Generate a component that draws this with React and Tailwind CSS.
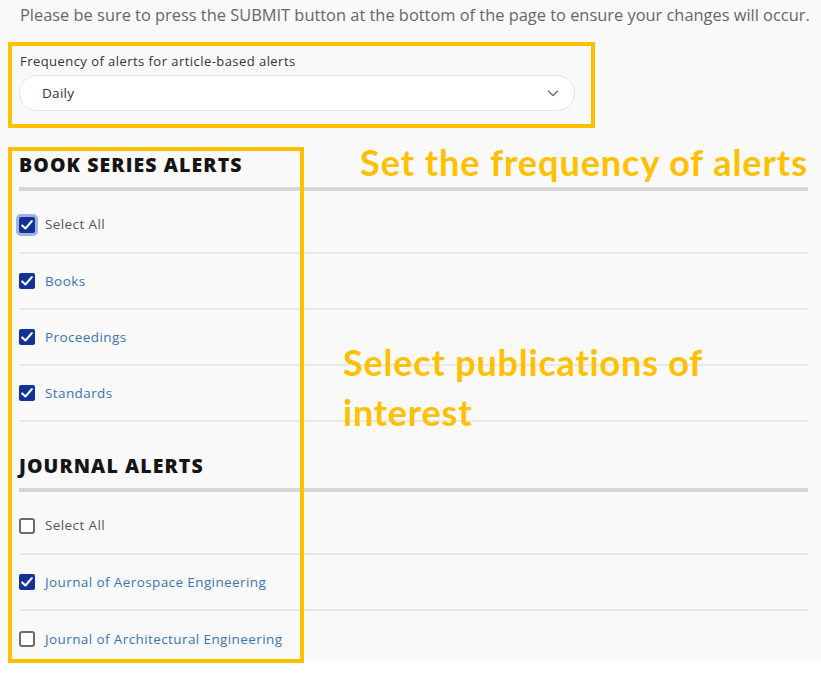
import React from "react";

const ui = { fontFamily: '"Open Sans", "Liberation Sans", sans-serif' };
const note = { fontFamily: 'Lato, "Open Sans", sans-serif' };

function Check({ checked, focus }) {
  if (checked) {
    return (
      <span
        className={`flex h-[16px] w-[16px] items-center justify-center rounded-[2px] bg-[#12329a] ${
          focus ? "ring-[3px] ring-[#7f95d6]/70" : ""
        }`}
      >
        <svg viewBox="0 0 16 16" className="h-[14px] w-[14px]" fill="none">
          <path d="M2.5 8.5 L6.2 12 L13.5 3.5" stroke="white" strokeWidth="2.4" strokeLinecap="round" strokeLinejoin="round" />
        </svg>
      </span>
    );
  }
  return <span className="block h-[16px] w-[16px] rounded-[3px] border-2 border-[#6b6b6b] bg-white" />;
}

function Row({ label, checked, link, focus, first, last }) {
  return (
    <div
      className={`flex items-center gap-[10px] ${last ? "" : "border-b-2 border-[#e8e8e8]"} ${
        first ? "h-[63px] pt-[6px]" : "h-[56px]"
      }`}
    >
      <Check checked={checked} focus={focus} />
      <span className={`text-[13.5px] tracking-[0.4px] ${link ? "text-[#3a74b4]" : "text-[#555]"}`}>{label}</span>
    </div>
  );
}

function Heading({ children }) {
  return (
    <div className="border-b-[4px] border-[#d6d6d6] pb-[10px]">
      <h2 className="text-[19.5px] font-extrabold leading-[24px] tracking-[1.1px] text-[#151515]">{children}</h2>
    </div>
  );
}

export default function App() {
  return (
    <div className="h-[684px] w-[821px] overflow-hidden bg-white" style={ui}>
      <div className="relative h-[660px] bg-[#f9f9f9] pl-[19px] pr-[13px]">
        <p className="whitespace-nowrap pt-[5px] pl-[1px] text-[16.4px] leading-[20px] text-[#666]">
          Please be sure to press the SUBMIT button at the bottom of the page to ensure your changes will occur.
        </p>

        <div className="mt-[29px] w-[556px]">
          <label className="block pl-[1px] text-[13px] leading-[14px] tracking-[0.45px] text-[#333]">
            Frequency of alerts for article-based alerts
          </label>
          <div className="mt-[7px] flex h-[36px] items-center justify-between rounded-full border border-[#e4e4e4] bg-white pl-[22px] pr-[14px]">
            <span className="text-[13.5px] tracking-[0.3px] text-[#333]">Daily</span>
            <svg viewBox="0 0 16 16" className="h-[14px] w-[14px]" fill="none">
              <path d="M3 6 L8 11 L13 6" stroke="#666" strokeWidth="1.6" strokeLinecap="round" strokeLinejoin="round" />
            </svg>
          </div>
        </div>

        <div className="mt-[42px]">
          <Heading>BOOK SERIES ALERTS</Heading>
          <Row label="Select All" checked focus first />
          <Row label="Books" checked link />
          <Row label="Proceedings" checked link />
          <Row label="Standards" checked link />
        </div>

        <div className="mt-[32px]">
          <Heading>JOURNAL ALERTS</Heading>
          <Row label="Select All" first />
          <Row label="Journal of Aerospace Engineering" checked link />
          <Row label="Journal of Architectural Engineering" link last />
        </div>

        <div className="pointer-events-none absolute left-[8px] top-[42px] h-[86px] w-[587px] border-4 border-[#ffc000]" />
        <div className="pointer-events-none absolute left-[8px] top-[147px] h-[516px] w-[296px] border-4 border-[#ffc000]" />

        <div
          className="pointer-events-none absolute left-[360px] top-[141px] text-[36px] font-bold leading-[42px] tracking-[0.95px] text-[#ffc000]"
          style={note}
        >
          Set the frequency of alerts
        </div>
        <div
          className="pointer-events-none absolute left-[343px] top-[337px] w-[400px] text-[36px] font-bold leading-[50px] tracking-[0.8px] text-[#ffc000]"
          style={note}
        >
          Select publications of interest
        </div>
      </div>
    </div>
  );
}
